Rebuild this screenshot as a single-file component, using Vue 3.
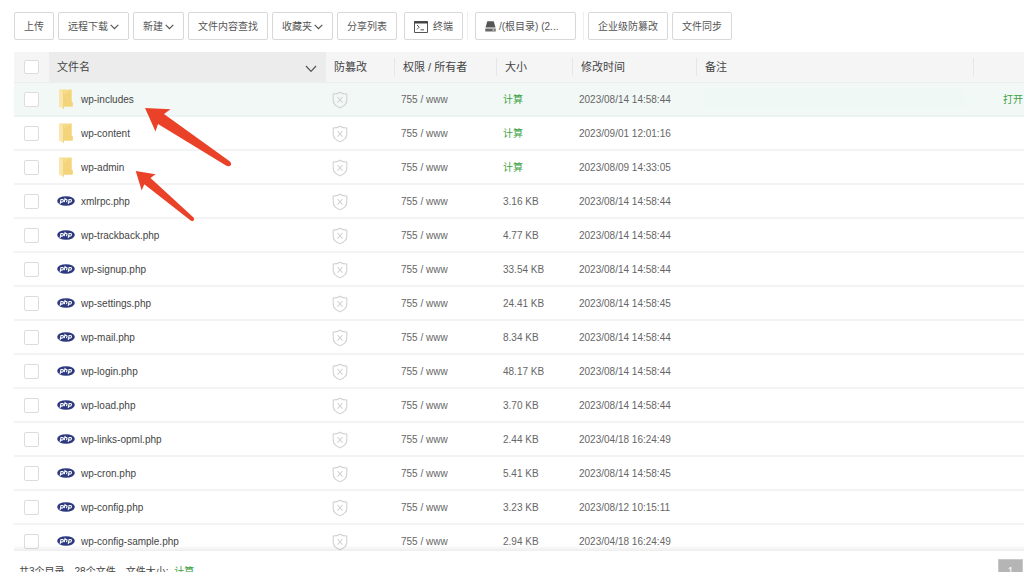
<script setup>
import { ref } from 'vue'

const files = ref([
  { name: 'wp-includes', folder: true, time: '2023/08/14 14:58:44', active: true },
  { name: 'wp-content', folder: true, time: '2023/09/01 12:01:16' },
  { name: 'wp-admin', folder: true, time: '2023/08/09 14:33:05' },
  { name: 'xmlrpc.php', size: '3.16 KB', time: '2023/08/14 14:58:44' },
  { name: 'wp-trackback.php', size: '4.77 KB', time: '2023/08/14 14:58:44' },
  { name: 'wp-signup.php', size: '33.54 KB', time: '2023/08/14 14:58:44' },
  { name: 'wp-settings.php', size: '24.41 KB', time: '2023/08/14 14:58:45' },
  { name: 'wp-mail.php', size: '8.34 KB', time: '2023/08/14 14:58:44' },
  { name: 'wp-login.php', size: '48.17 KB', time: '2023/08/14 14:58:44' },
  { name: 'wp-load.php', size: '3.70 KB', time: '2023/08/14 14:58:44' },
  { name: 'wp-links-opml.php', size: '2.44 KB', time: '2023/04/18 16:24:49' },
  { name: 'wp-cron.php', size: '5.41 KB', time: '2023/08/14 14:58:45' },
  { name: 'wp-config.php', size: '3.23 KB', time: '2023/08/12 10:15:11' },
  { name: 'wp-config-sample.php', size: '2.94 KB', time: '2023/04/18 16:24:49' }
])
const tools = [
  { label: '上传' },
  { label: '远程下载', menu: true },
  { label: '新建', menu: true },
  { label: '文件内容查找' },
  { label: '收藏夹', menu: true },
  { label: '分享列表' }
]
</script>

<template>
  <main class="manager">
    <nav class="toolbar">
      <button v-for="t in tools" :key="t.label" type="button" class="btn">
        {{ t.label }}
        <svg v-if="t.menu" class="caret" viewBox="0 0 9 6"><path d="M.7 .8 4.5 4.7 8.3 .8" /></svg>
      </button>
      <button type="button" class="btn terminal">
        <svg class="terminal-icon" viewBox="0 0 14 12">
          <path d="M.5 .5h13v11H.5z" fill="#fff" stroke="#555" />
          <path d="M0 1.5h14" stroke="#444" stroke-width="2" />
          <path d="M3 4l2.2 2.2L3 8.400M6.500 8.800h3.500" fill="none" stroke="#555" />
        </svg>
        终端
      </button>
      <span class="split"></span>
      <button type="button" class="btn disk">
        <svg class="disk-icon" viewBox="0 0 11 11">
          <path d="M2.3 .3h6.4l1.8 6.3H.5z" fill="#555" />
          <path d="M.3 7.500h10.400v3H.3z" fill="#666" />
          <path d="M7.500 9h1.800" stroke="#fff" />
        </svg>
        <span>/(根目录) (2...</span>
      </button>
      <span class="split"></span>
      <button type="button" class="btn">企业级防篡改</button>
      <button type="button" class="btn">文件同步</button>
    </nav>

    <section class="list">
      <table>
        <colgroup>
          <col class="c-check" /><col class="c-name" /><col class="c-guard" /><col class="c-perm" />
          <col class="c-size" /><col class="c-time" /><col /><col class="c-ops" />
        </colgroup>
        <thead>
          <tr>
            <th class="check"><input type="checkbox" aria-label="全选" /></th>
            <th class="sorted">
              <div class="sort">文件名 <svg viewBox="0 0 12 8"><path d="M1 1 6 6.4 11 1" /></svg></div>
            </th>
            <th><div class="head">防篡改</div></th>
            <th><div class="head line">权限 / 所有者</div></th>
            <th><div class="head line">大小</div></th>
            <th><div class="head line">修改时间</div></th>
            <th><div class="head line">备注</div></th>
            <th><div class="head line"></div></th>
          </tr>
        </thead>
        <tbody>
          <tr v-for="f in files" :key="f.name" :class="{ active: f.active }">
            <td class="check"><input type="checkbox" :aria-label="f.name" /></td>
            <td class="name">
              <div class="file">
                <svg v-if="f.folder" class="folder" viewBox="0 0 14 20">
                  <path d="M1 .5h11.500v12l1.200 1V17.500H4z" fill="#f6dc88" />
                  <path d="M4.800 17.500V6L12.500 .5v12l1.200 1v4z" fill="#f3d47a" />
                  <path d="M0 .5h1.200L4.800 3v17L0 17.500z" fill="#f9e6a8" />
                  <path d="M4.800 3v17l-.8-.4V2.400z" fill="#edd080" />
                </svg>
                <svg v-else class="php" viewBox="0 0 18 10">
                  <ellipse cx="9" cy="5" rx="8.8" ry="4.800" fill="#2e3a80" />
                  <g fill="none" stroke="#fff" stroke-width="1.1">
                    <path d="M3.1 7.8 4 3.5h1.3c1.7 0 1.2 2.6-.5 2.6H3.6M8.2 1.9 7.2 6.2M7.9 3.5h1.4c.8 0 .8.5.6 1.1l-.4 1.6M11.2 7.8l.9-4.3h1.3c1.7 0 1.2 2.6-.5 2.6h-1.2" />
                  </g>
                </svg>
                <span>{{ f.name }}</span>
              </div>
            </td>
            <td class="guard">
              <svg class="shield" viewBox="0 0 16 18">
                <path d="M8 1.2C6.2 2.4 3.7 3 1.2 3v6c0 3.8 3 6.4 6.8 7.8 3.800-1.400 6.800-4 6.800-7.800V3C12.300 3 9.800 2.400 8 1.200z" />
                <path d="M5.500 6l5 5.600M10.500 6l-5 5.600" />
              </svg>
            </td>
            <td>755 / www</td>
            <td><a v-if="f.folder" href="#">计算</a><template v-else>{{ f.size }}</template></td>
            <td>{{ f.time }}</td>
            <td class="note"><input v-if="f.active" type="text" aria-label="备注" /></td>
            <td class="ops"><a v-if="f.active" href="#">打开</a></td>
          </tr>
        </tbody>
      </table>
      <div class="fade"></div>
    </section>

    <footer class="summary">
      <span>共3个目录，28个文件，文件大小: <a href="#">计算</a></span>
      <button type="button" class="page">1</button>
    </footer>

    <svg class="arrows" viewBox="0 0 100 120" aria-hidden="true">
      <path d="M10 8 35.500 9.300 29 14 95 61.500Q97 64 95.500 65.500 94 67 91 65.500L23 24 20.500 31.500z" />
      <path d="M.7 71 20.500 74.300 15.500 78 58.500 117.500Q60 119 58.500 120.500 57 122 55 120L9.300 84.300 6.700 90.500z" />
    </svg>
  </main>
</template>

<style>
body { margin: 0; background: #fff; }
</style>

<style scoped>
* { box-sizing: border-box; }
.manager {
  position: relative;
  display: flex;
  flex-direction: column;
  height: 100vh;
  padding: 12px 0 0 14px;
  overflow: hidden;
  font: 10px/14px "Liberation Sans", "Noto Sans CJK SC", sans-serif;
  color: #666;
}
button, input { font: inherit; margin: 0; }
a { color: #3da345; text-decoration: none; }
.toolbar { display: flex; flex: none; gap: 4px; margin-bottom: 12px; }
.btn {
  display: flex;
  align-items: center;
  height: 28px;
  padding: 1px 9px 0;
  color: #555;
  background: #fff;
  border: 1px solid #d8d8d8;
  border-radius: 2px;
  white-space: nowrap;
}
.caret { width: 9px; height: 6px; margin-left: 2px; fill: none; stroke: #555; stroke-width: 1.2; }
.terminal { margin-left: 3px; }
.terminal-icon { width: 14px; height: 12px; margin-right: 5px; }
.split { width: 1px; height: 28px; background: #eee; }
.disk { width: 101px; margin: 0 3px; }
.disk-icon { width: 11px; height: 11px; margin-right: 3px; }
.list { position: relative; flex: 1; min-height: 0; overflow: hidden; }
table { width: 100%; table-layout: fixed; border-collapse: separate; border-spacing: 0; }
.c-check { width: 35px; }
.c-name { width: 277px; }
.c-guard { width: 68px; }
.c-perm { width: 102px; }
.c-size { width: 76px; }
.c-time { width: 124px; }
.c-ops { width: 51px; }
th {
  height: 31px;
  padding: 0;
  font-size: 11px;
  font-weight: normal;
  text-align: left;
  color: #444;
  background: #f5f5f5;
  border-bottom: 1px solid #eee;
}
.sorted { background: #ececec; }
.sort { display: flex; align-items: center; justify-content: space-between; padding: 0 9px 0 8px; }
.sort svg { width: 12px; height: 8px; margin-top: 4px; fill: none; stroke: #555; stroke-width: 1.2; }
.head { height: 18px; padding-left: 8px; line-height: 18px; }
.line { border-left: 1px solid #e6e6e6; }
td { height: 34px; padding: 2px 0 0 7px; border-bottom: 2px solid #f3f3f3; white-space: nowrap; }
.check { padding: 0 0 0 10px; }
.check input {
  display: block;
  width: 15px;
  height: 15px;
  appearance: none;
  background: #fff;
  border: 1px solid #dcdcdc;
  border-radius: 2px;
}
th.check input { height: 14px; }
.active td { background: #f2f8f6; border-color: #ebf4f1; }
.file { display: flex; align-items: center; color: #444; }
.file span { padding-top: 1px; }
.name { padding: 0 0 0 8px; }
.folder { width: 14px; height: 20px; margin: 0 8px 0 2px; }
.php { width: 18px; height: 10px; margin-right: 6px; }
.shield { display: block; width: 16px; height: 18px; fill: none; stroke: #d2d2d2; stroke-width: 1.1; }
td.guard { padding: 1px 0 0 6px; }
td.note { padding: 0 7px; }
.note input { display: block; width: 100%; height: 20px; padding: 0 4px; border: 0; border-radius: 2px; background: #eff8f5; }
td.ops { padding-left: 30px; overflow: hidden; }
.fade {
  position: absolute;
  inset: auto 0 0 0;
  height: 6px;
  background: linear-gradient(rgba(0, 0, 0, 0), rgba(0, 0, 0, 0.07));
}
.summary {
  display: flex;
  flex: none;
  align-items: flex-start;
  justify-content: space-between;
  height: 21px;
  padding: 8px 1px 0 5px;
  color: #444;
}
.summary span { padding-top: 6px; }
.summary a { margin-left: 3px; }
.page { flex: none; width: 25px; height: 25px; padding: 0; color: #fff; background: #b5b5b5; border: 1px solid #c9c9c9; }
.arrows { position: absolute; left: 135px; top: 100px; width: 100px; height: 120px; fill: #e94228; overflow: visible; pointer-events: none; }
</style>
